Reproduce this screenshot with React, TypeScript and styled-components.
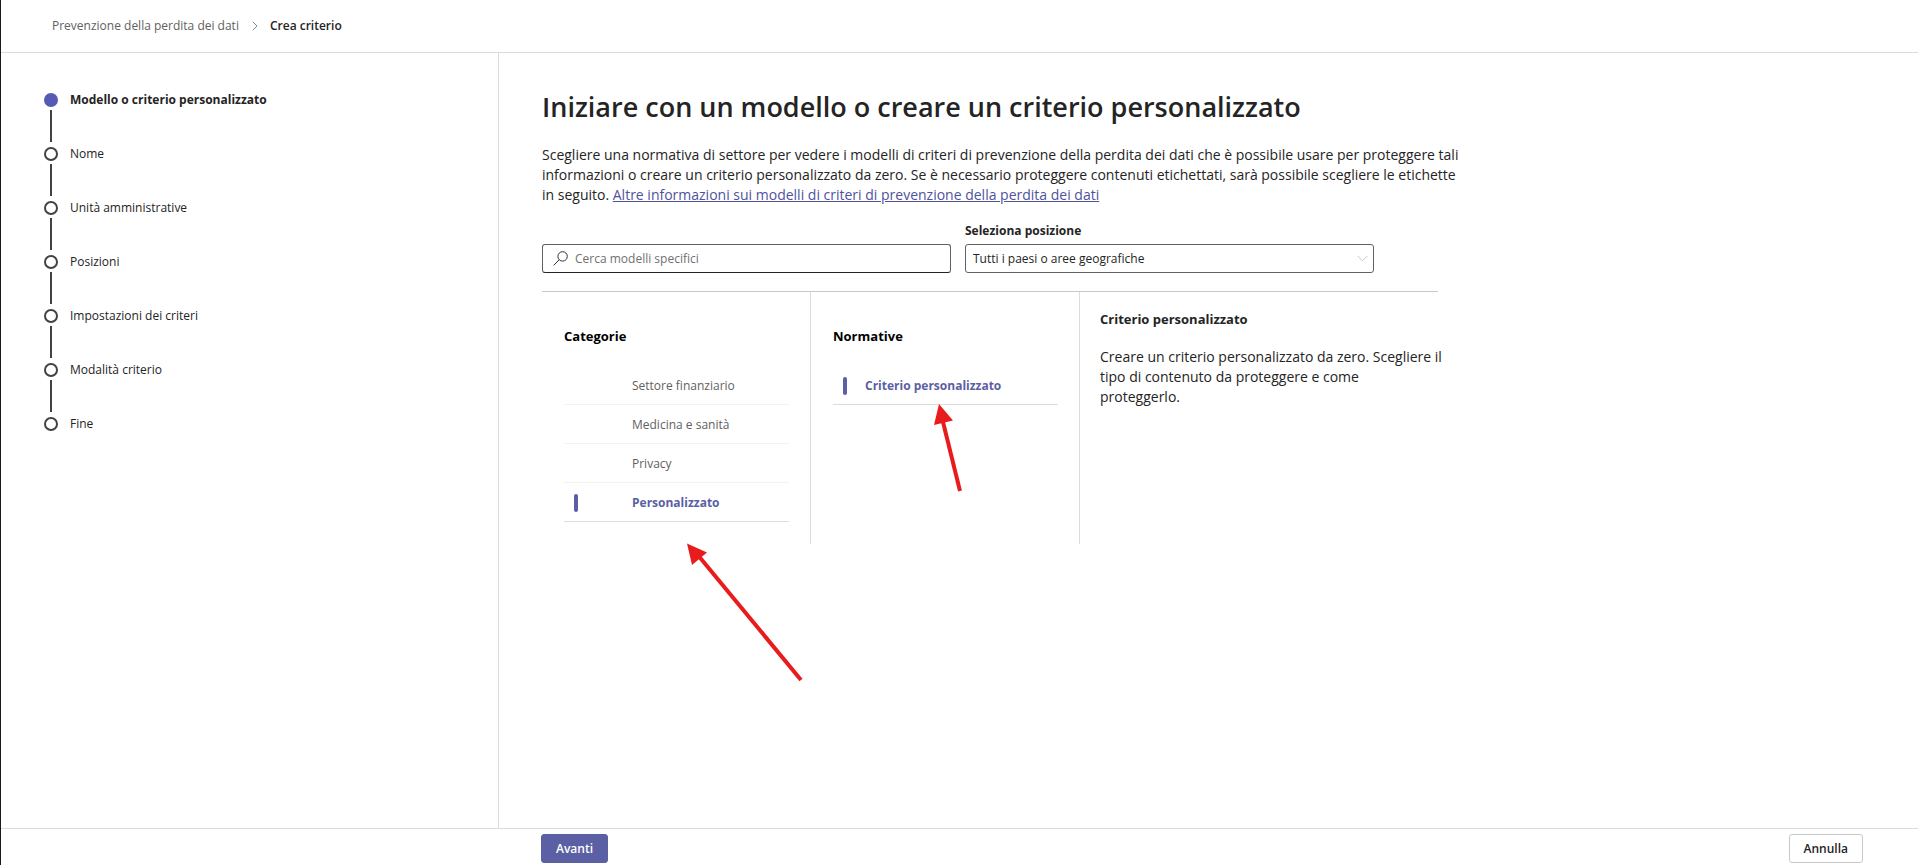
import React, { useState } from 'react';
import styled, { createGlobalStyle } from 'styled-components';

const GlobalStyle = createGlobalStyle`
  *, *::before, *::after { box-sizing: border-box; }
  body {
    margin: 0;
    background: #fff;
    color: #242424;
    font: 12px/20px 'Open Sans', 'Noto Sans', sans-serif;
  }
  button, input, select { font: inherit; color: inherit; }
`;

const Page = styled.div`
  display: flex;
  flex-direction: column;
  min-height: 100vh;
  border-left: 1px solid #1b1a19;
`;

const Header = styled.header`
  padding: 16px 51px;
  border-bottom: 1px solid #dcdcdc;
`;

const Breadcrumb = styled.ol`
  display: flex;
  align-items: center;
  gap: 12px;
  margin: 0;
  padding: 0;
  list-style: none;
`;

const Crumb = styled.li`
  display: flex;
  align-items: center;
  gap: 13px;
  font-weight: ${(p: { $current?: boolean }) => (p.$current ? 600 : 400)};
`;

const CrumbLink = styled.a`
  color: #616161;
  text-decoration: none;
`;

const Body = styled.div`
  display: flex;
  flex: 1;
`;

const Sidebar = styled.nav`
  flex: 0 0 498px;
  padding: 37px 43px;
  border-right: 1px solid #dcdcdc;
`;

const Steps = styled.ol`
  display: flex;
  flex-direction: column;
  margin: 0;
  padding: 0;
  list-style: none;
`;

const Step = styled.li`
  display: grid;
  grid-template-columns: 14px 1fr;
  grid-template-rows: 20px 1fr;
  column-gap: 12px;
  justify-items: start;
  height: 54px;
  font-weight: ${(p: { $current?: boolean }) => (p.$current ? 700 : 400)};

  &:not(:last-child)::after {
    content: '';
    justify-self: center;
    width: 2px;
    height: 32px;
    background: #424242;
  }
`;

const StepDot = styled.span`
  align-self: center;
  width: 14px;
  height: 14px;
  border: 2px solid ${(p: { $current?: boolean }) => (p.$current ? '#555bb5' : '#424242')};
  border-radius: 50%;
  background: ${(p: { $current?: boolean }) => (p.$current ? '#555bb5' : '#fff')};
`;

const Main = styled.main`
  flex: 1;
  min-width: 0;
  padding: 34px 43px;
`;

const Content = styled.div`
  max-width: 896px;
`;

const Title = styled.h1`
  margin: 0 0 18px;
  font-size: 27px;
  line-height: 40px;
  font-weight: 600;
`;

const Text = styled.p`
  margin: 0 -28px 0 0;
  font-size: 14px;
`;

const TextLink = styled.a`
  color: #4f529d;
  text-decoration: underline;
`;

const Filters = styled.div`
  display: grid;
  grid-template-columns: 409px 409px;
  align-items: end;
  column-gap: 14px;
  margin-top: 16px;
`;

const SearchBox = styled.label`
  display: flex;
  align-items: center;
  gap: 7px;
  height: 29px;
  padding: 0 10px;
  border: 1px solid #616161;
  border-bottom-color: #242424;
  border-radius: 3px;
`;

const SearchInput = styled.input.attrs({ type: 'search' })`
  flex: 1;
  min-width: 0;
  padding: 0;
  border: 0;
  outline: 0;
  background: none;
  &::placeholder { color: #707070; opacity: 1; }
`;

const Field = styled.div`
  display: flex;
  flex-direction: column;
  gap: 3px;
`;

const FieldLabel = styled.label`
  font-weight: 700;
`;

const SelectWrap = styled.div`
  display: grid;
  align-items: center;
  & > * { grid-area: 1 / 1; }
  & > svg { justify-self: end; margin-right: 6px; pointer-events: none; }
`;

const Select = styled.select`
  appearance: none;
  width: 100%;
  height: 29px;
  padding: 0 24px 0 7px;
  border: 1px solid #616161;
  border-radius: 3px;
  background: #fff;
`;

const Panels = styled.div`
  position: relative;
  display: grid;
  grid-template-columns: 269px 269px 1fr;
  min-height: 253px;
  margin-top: 18px;
  border-top: 1px solid #c8c8c8;
`;

const ListPanel = styled.section`
  padding: 34px 21px 0 22px;
  border-right: 1px solid #dcdcdc;
`;

const PanelTitle = styled.h2`
  margin: 0;
  font-size: 13px;
  line-height: 20px;
  font-weight: 700;
  color: ${(p: { $dark?: boolean }) => (p.$dark ? '#000' : '#242424')};
`;

const Options = styled.ul`
  margin: 20px 0 0;
  padding: 0;
  list-style: none;
`;

const OptionRow = styled.li`
  border-bottom: 1px solid ${(p: { $selected: boolean }) => (p.$selected ? '#dcdcdc' : '#f2f2f2')};
`;

const OptionButton = styled.button<{ $selected: boolean; $indent: number }>`
  display: grid;
  grid-template-columns: ${(p) => p.$indent}px 1fr;
  align-items: center;
  width: 100%;
  height: 38px;
  padding: 1px 0 0 10px;
  border: 0;
  background: none;
  text-align: left;
  color: ${(p) => (p.$selected ? '#5b5fa3' : '#616161')};
  font-weight: ${(p) => (p.$selected ? 700 : 400)};
`;

const Marker = styled.span<{ $on: boolean }>`
  width: 4px;
  height: 18px;
  border-radius: 2px;
  background: ${(p) => (p.$on ? '#5b5fa3' : 'transparent')};
`;

const Detail = styled.section`
  display: flex;
  flex-direction: column;
  gap: 18px;
  padding: 17px 0 0 20px;
`;

const Arrows = styled.svg`
  position: absolute;
  top: 112px;
  left: 144px;
  pointer-events: none;
`;

const Footer = styled.footer`
  display: flex;
  justify-content: space-between;
  padding: 5px 55px 2px 540px;
  border-top: 1px solid #dcdcdc;
`;

const Button = styled.button<{ $primary?: boolean }>`
  height: 29px;
  padding: 0 14px;
  border: 1px solid ${(p) => (p.$primary ? '#5b5fa3' : '#c8c8c8')};
  border-radius: 3px;
  background: ${(p) => (p.$primary ? '#5b5fa3' : '#fff')};
  color: ${(p) => (p.$primary ? '#fff' : '#242424')};
  font-weight: 600;
`;

const steps = [
  'Modello o criterio personalizzato',
  'Nome',
  'Unità amministrative',
  'Posizioni',
  'Impostazioni dei criteri',
  'Modalità criterio',
  'Fine',
];

const categories = ['Settore finanziario', 'Medicina e sanità', 'Privacy', 'Personalizzato'];
const regulations = ['Criterio personalizzato'];

interface OptionListProps {
  title: string;
  items: string[];
  selected: string;
  indent: number;
  onSelect: (item: string) => void;
}

function OptionList({ title, items, selected, indent, onSelect }: OptionListProps) {
  return (
    <ListPanel>
      <PanelTitle $dark>{title}</PanelTitle>
      <Options>
        {items.map((item) => (
          <OptionRow key={item} $selected={item === selected}>
            <OptionButton
              type="button"
              $selected={item === selected}
              $indent={indent}
              aria-pressed={item === selected}
              onClick={() => onSelect(item)}
            >
              <Marker $on={item === selected} />
              {item}
            </OptionButton>
          </OptionRow>
        ))}
      </Options>
    </ListPanel>
  );
}

export default function App() {
  const [category, setCategory] = useState('Personalizzato');
  const [regulation, setRegulation] = useState('Criterio personalizzato');

  return (
    <Page>
      <GlobalStyle />
      <Header>
        <nav aria-label="Percorso">
          <Breadcrumb>
            <Crumb>
              <CrumbLink href="#prevenzione">Prevenzione della perdita dei dati</CrumbLink>
              <svg width="6" height="10" viewBox="0 0 6 10" fill="none" stroke="#8a8886" aria-hidden="true">
                <path d="M0.8 0.8 5 5 0.8 9.2" />
              </svg>
            </Crumb>
            <Crumb $current aria-current="page">Crea criterio</Crumb>
          </Breadcrumb>
        </nav>
      </Header>
      <Body>
        <Sidebar>
          <Steps>
            {steps.map((label, i) => (
              <Step key={label} $current={i === 0}>
                <StepDot $current={i === 0} />
                <span>{label}</span>
              </Step>
            ))}
          </Steps>
        </Sidebar>
        <Main>
          <Content>
            <Title>Iniziare con un modello o creare un criterio personalizzato</Title>
            <Text>
              Scegliere una normativa di settore per vedere i modelli di criteri di prevenzione della perdita dei dati
              che è possibile usare per proteggere tali
              <br />
              informazioni o creare un criterio personalizzato da zero. Se è necessario proteggere contenuti
              etichettati, sarà possibile scegliere le etichette
              <br />
              in seguito.{' '}
              <TextLink href="#informazioni">
                Altre informazioni sui modelli di criteri di prevenzione della perdita dei dati
              </TextLink>
            </Text>
            <Filters>
              <SearchBox>
                <svg width="15" height="15" viewBox="0 0 15 15" fill="none" stroke="#323130" aria-hidden="true">
                  <circle cx="9.6" cy="5.4" r="4.7" />
                  <path d="M6.2 8.8 0.6 14.4" />
                </svg>
                <SearchInput placeholder="Cerca modelli specifici" aria-label="Cerca modelli specifici" />
              </SearchBox>
              <Field>
                <FieldLabel htmlFor="posizione">Seleziona posizione</FieldLabel>
                <SelectWrap>
                  <Select id="posizione">
                    <option>Tutti i paesi o aree geografiche</option>
                  </Select>
                  <svg width="11" height="7" viewBox="0 0 11 7" fill="none" stroke="#c8c6c4" aria-hidden="true">
                    <path d="M0.5 0.8 5.5 5.8 10.5 0.8" />
                  </svg>
                </SelectWrap>
              </Field>
            </Filters>
            <Panels>
              <OptionList title="Categorie" items={categories} selected={category} indent={58} onSelect={setCategory} />
              <OptionList
                title="Normative"
                items={regulations}
                selected={regulation}
                indent={22}
                onSelect={setRegulation}
              />
              <Detail>
                <PanelTitle>Criterio personalizzato</PanelTitle>
                <Text>
                  Creare un criterio personalizzato da zero. Scegliere il
                  <br />
                  tipo di contenuto da proteggere e come
                  <br />
                  proteggerlo.
                </Text>
              </Detail>
              <Arrows width="290" height="290" viewBox="0 0 290 290" fill="#e81c1c" stroke="#e81c1c" aria-hidden="true">
                <path d="M11 150 115 276" strokeWidth="4" />
                <path d="M1 139.500 21 148.500 6 161z" stroke="none" />
                <path d="M257 18 274 87" strokeWidth="4" />
                <path d="M253 0 267 16.500 248 21z" stroke="none" />
              </Arrows>
            </Panels>
          </Content>
        </Main>
      </Body>
      <Footer>
        <Button type="button" $primary>Avanti</Button>
        <Button type="button">Annulla</Button>
      </Footer>
    </Page>
  );
}
